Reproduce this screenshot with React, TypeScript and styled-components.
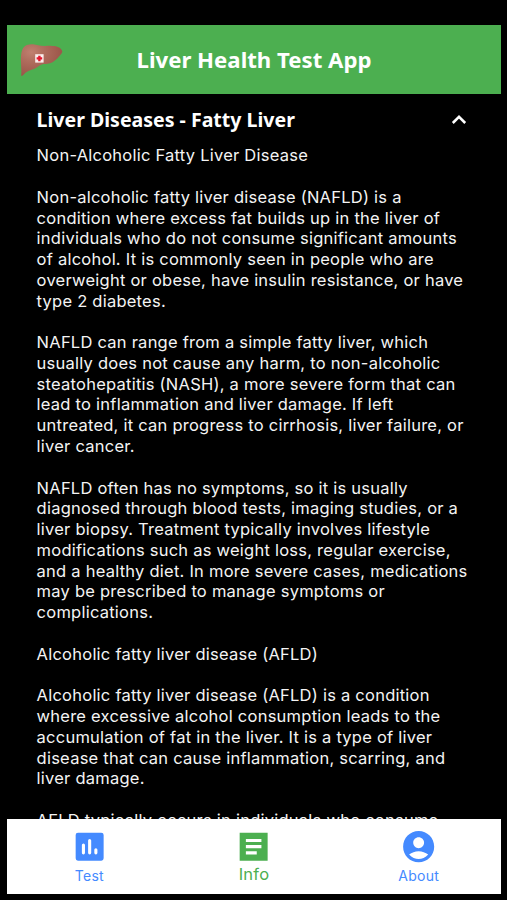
import React from "react";
import styled, { createGlobalStyle } from "styled-components";

const GlobalStyle = createGlobalStyle`
  *, *::before, *::after { box-sizing: border-box; }
  body { margin: 0; background: #000; }
`;

const Screen = styled.div`
  display: flex;
  flex-direction: column;
  height: 900px;
  width: 507px;
  padding: 25px 6px 6px 7px;
  background: #000;
  color: #fff;
  overflow: hidden;
  font-family: Inter, sans-serif;
`;

const Header = styled.header`
  display: grid;
  grid-template-columns: 60px 1fr 60px;
  align-items: center;
  flex: none;
  height: 69px;
  background: #4caf50;
`;

const Logo = styled.svg`
  width: 44px;
  height: 34px;
  margin-left: 13px;
`;

const Title = styled.h1`
  margin: 0;
  text-align: center;
  font: 700 22.2px/30px "Noto Sans", sans-serif;
`;

const Content = styled.main`
  flex: 1;
  min-height: 0;
  overflow: hidden;
  padding: 11px 30px 0 29.6px;
`;

const SectionHeader = styled.div`
  display: flex;
  align-items: center;
  justify-content: space-between;
  height: 30px;
`;

const SectionTitle = styled.h2`
  margin: 0;
  font: 700 19.55px/28px "Noto Sans", sans-serif;
`;

const Chevron = styled.svg`
  width: 16px;
  height: 12px;
  margin-right: 3.6px;
`;

const Article = styled.div`
  margin-top: 10.3px;
  color: #f4f4f4;
  font-size: 16.5px;
  line-height: 20.77px;
  letter-spacing: 0.24px;
`;

const Paragraph = styled.p`
  margin: 0 0 20.77px;
  white-space: pre;
`;

const Nav = styled.nav`
  display: grid;
  grid-template-columns: repeat(3, 1fr);
  flex: none;
  height: 75px;
  background: #fff;
`;

const Tab = styled.a<{ $active?: boolean }>`
  display: flex;
  flex-direction: column;
  align-items: center;
  padding-top: 8.5px;
  color: ${(p) => (p.$active ? "#4caf50" : "#448aff")};
  font-size: ${(p) => (p.$active ? "16.5px" : "14px")};
  line-height: ${(p) => (p.$active ? "19px" : "22px")};
  letter-spacing: 0.24px;
`;

const TabIcon = styled.svg`
  width: 37.3px;
  height: 37.3px;
  flex: none;
  fill: currentColor;
`;

const TabLabel = styled.span`
  height: 22px;
`;

const paragraphs: string[] = [
  `Non-Alcoholic Fatty Liver Disease`,
  `Non-alcoholic fatty liver disease (NAFLD) is a
condition where excess fat builds up in the liver of
individuals who do not consume significant amounts
of alcohol. It is commonly seen in people who are
overweight or obese, have insulin resistance, or have
type 2 diabetes.`,
  `NAFLD can range from a simple fatty liver, which
usually does not cause any harm, to non-alcoholic
steatohepatitis (NASH), a more severe form that can
lead to inflammation and liver damage. If left
untreated, it can progress to cirrhosis, liver failure, or
liver cancer.`,
  `NAFLD often has no symptoms, so it is usually
diagnosed through blood tests, imaging studies, or a
liver biopsy. Treatment typically involves lifestyle
modifications such as weight loss, regular exercise,
and a healthy diet. In more severe cases, medications
may be prescribed to manage symptoms or
complications.`,
  `Alcoholic fatty liver disease (AFLD)`,
  `Alcoholic fatty liver disease (AFLD) is a condition
where excessive alcohol consumption leads to the
accumulation of fat in the liver. It is a type of liver
disease that can cause inflammation, scarring, and
liver damage.`,
  `AFLD typically occurs in individuals who consume`,
];

const LiverLogo = () => (
  <Logo viewBox="0 0 44 34" aria-hidden="true">
    <defs>
      <radialGradient id="liver" cx="0.25" cy="0.25" r="0.8">
        <stop offset="0" stopColor="#c08070" />
        <stop offset="0.35" stopColor="#b06e5e" />
        <stop offset="1" stopColor="#9a5347" />
      </radialGradient>
    </defs>
    <path
      d="M1.2 32.3C1.5 29 1.2 25 1 20C0.8 14 1 8 3.5 4.5C5.5 2 9 1 13 1.3C17 1.6 20 3.2 25 3C31 2.6 38 3 40.5 5.5C42.6 7.8 42.8 8.8 41.5 10.5C38 15 34 19.5 29 20.5C25 21.3 22 20.5 19 23C14 27 7.5 27 4 31.3C2.5 33 1.2 33.4 1.2 32.3Z"
      fill="url(#liver)"
    />
    <rect x="15.2" y="11.2" width="8.4" height="8.4" fill="#fbeeee" />
    <path d="M18.2 12.7h2.4v1.5h1.6v2.4h-1.6v1.6h-2.4v-1.6h-1.6v-2.4h1.6z" fill="#e3172d" />
  </Logo>
);

export default function App() {
  return (
    <>
      <GlobalStyle />
      <Screen>
        <Header>
          <LiverLogo />
          <Title>Liver Health Test App</Title>
        </Header>
        <Content>
          <SectionHeader>
            <SectionTitle>Liver Diseases - Fatty Liver</SectionTitle>
            <Chevron viewBox="0 0 16 12" aria-hidden="true">
              <path d="M1.8 9L8 2.8L14.2 9" fill="none" stroke="#fff" strokeWidth="2.5" />
            </Chevron>
          </SectionHeader>
          <Article>
            {paragraphs.map((text) => (
              <Paragraph key={text}>{text}</Paragraph>
            ))}
          </Article>
        </Content>
        <Nav>
          <Tab>
            <TabIcon viewBox="0 0 24 24">
              <path
                fillRule="evenodd"
                d="M4.5 3h15a1.5 1.5 0 0 1 1.5 1.5v15a1.5 1.5 0 0 1-1.5 1.5h-15A1.5 1.5 0 0 1 3 19.500v-15A1.5 1.5 0 0 1 4.500 3zM8 10a1 1 0 0 0-1 1v5a1 1 0 0 0 2 0v-5a1 1 0 0 0-1-1zM12 7a1 1 0 0 0-1 1v8a1 1 0 0 0 2 0V8a1 1 0 0 0-1-1zM16 13a1 1 0 0 0-1 1v2a1 1 0 0 0 2 0v-2a1 1 0 0 0-1-1z"
              />
            </TabIcon>
            <TabLabel>Test</TabLabel>
          </Tab>
          <Tab $active>
            <TabIcon viewBox="0 0 24 24">
              <path fillRule="evenodd" d="M3 3h18v18H3zM7 7v2h10V7zM7 11v2h10v-2zM7 15v2h7v-2z" />
            </TabIcon>
            <TabLabel>Info</TabLabel>
          </Tab>
          <Tab>
            <TabIcon viewBox="0 0 24 24">
              <path d="M12 2C6.48 2 2 6.48 2 12s4.48 10 10 10 10-4.48 10-10S17.52 2 12 2zm0 4c1.93 0 3.5 1.57 3.5 3.5S13.93 13 12 13s-3.5-1.57-3.5-3.5S10.07 6 12 6zm0 14c-2.03 0-4.43-.82-6.14-2.88C7.55 15.8 9.68 15 12 15s4.45.8 6.14 2.12C16.43 19.18 14.03 20 12 20z" />
            </TabIcon>
            <TabLabel>About</TabLabel>
          </Tab>
        </Nav>
      </Screen>
    </>
  );
}
